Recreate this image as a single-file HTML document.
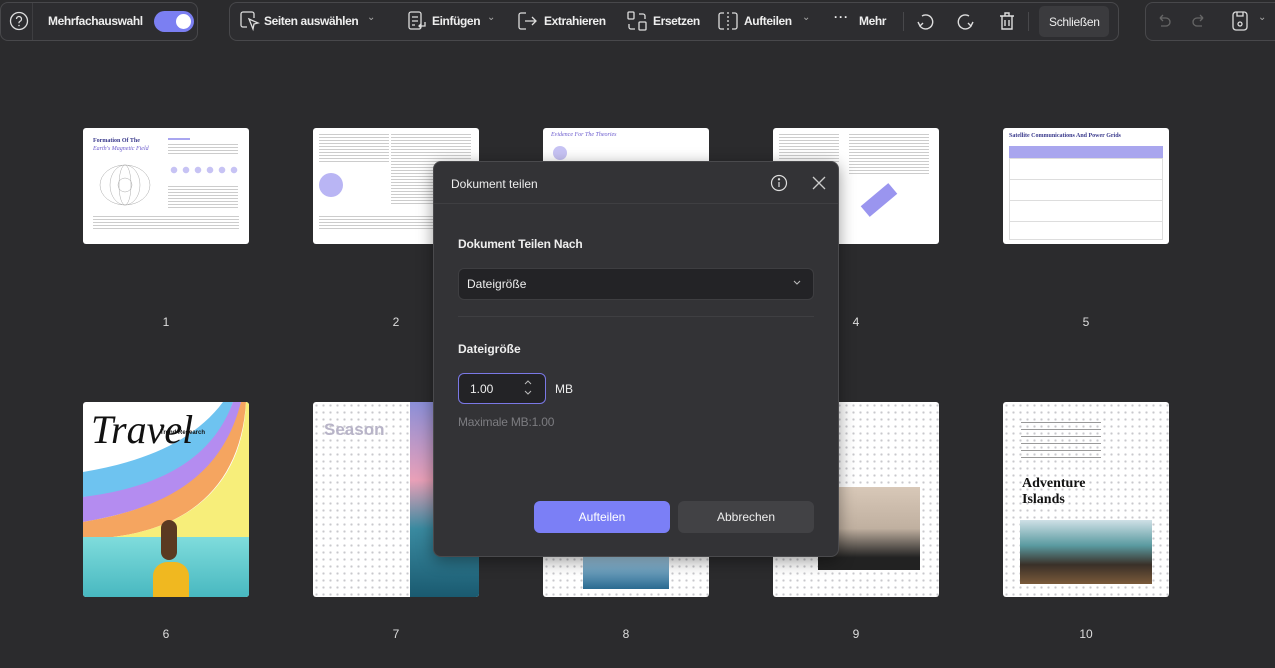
<!DOCTYPE html>
<html><head><meta charset="utf-8"><style>
*{box-sizing:border-box;margin:0;padding:0}
body{width:1275px;height:668px;background:#2b2b2d;font-family:"Liberation Sans",sans-serif;color:#e8e8e8;position:relative;overflow:hidden}
.panel{position:absolute;top:2px;height:39px;border:1px solid #48484b;border-radius:8px;background:#2d2d30}
.ti{position:absolute;top:14px;font-size:12px;font-weight:bold;color:#eee;white-space:nowrap;letter-spacing:-0.2px}
.ch{position:absolute;top:12px;font-size:10px;color:#aaa}
.ic{position:absolute;top:10px}
.th{position:absolute;background:#fff;border-radius:3px;overflow:hidden}
.num{position:absolute;font-size:12px;color:#ddd;width:20px;text-align:center}
.dots{background-color:#fff;background-image:radial-gradient(#c8c8cc 1px,transparent 1.3px);background-size:7px 7px}
.ln{position:absolute;height:2px;background:#bbb}
</style></head><body>

<div class="panel" style="left:0;width:198px"></div>
<svg class="ic" style="left:9px;top:11px" width="20" height="20" viewBox="0 0 20 20"><circle cx="10" cy="10" r="8.5" fill="none" stroke="#ddd" stroke-width="1.3"/><path d="M7.5 8a2.5 2.5 0 1 1 3.5 2.3c-.7.3-1 .8-1 1.5v.5" fill="none" stroke="#ddd" stroke-width="1.3"/><circle cx="10" cy="14.5" r=".8" fill="#ddd"/></svg>
<div style="position:absolute;left:32px;top:3px;width:1px;height:37px;background:#3e3e41"></div>
<div class="ti" style="left:48px;letter-spacing:-0.4px">Mehrfachauswahl</div>
<div style="position:absolute;left:154px;top:11px;width:40px;height:21px;border-radius:11px;background:#7b7ff2"></div>
<div style="position:absolute;left:176px;top:14px;width:15px;height:15px;border-radius:50%;background:#fff"></div>

<div class="panel" style="left:229px;width:890px"></div>
<svg class="ic" style="left:239px" width="22" height="22" viewBox="0 0 22 22" fill="none" stroke="#ddd" stroke-width="1.3"><path d="M8 17H4a2 2 0 0 1-2-2V4a2 2 0 0 1 2-2h9a2 2 0 0 1 2 2v4"/><path d="M10 9l9 4-4 1-1 5z"/></svg>
<div class="ti" style="left:264px;letter-spacing:-0.4px">Seiten auswählen</div><div class="ch" style="left:367px">⌄</div>
<svg class="ic" style="left:406px" width="22" height="22" viewBox="0 0 22 22" fill="none" stroke="#ddd" stroke-width="1.3"><rect x="3" y="2" width="12" height="17" rx="2"/><path d="M6 7h6M6 11h6M6 15h3M19 12v4h-6M15 14l-2 2 2 2"/></svg>
<div class="ti" style="left:432px;letter-spacing:-0.4px">Einfügen</div><div class="ch" style="left:487px">⌄</div>
<svg class="ic" style="left:516px" width="22" height="22" viewBox="0 0 22 22" fill="none" stroke="#ddd" stroke-width="1.3"><path d="M10 3H5a2 2 0 0 0-2 2v12a2 2 0 0 0 2 2h5M9 11h11M16 7l4 4-4 4"/></svg>
<div class="ti" style="left:544px;letter-spacing:-0.4px">Extrahieren</div>
<svg class="ic" style="left:626px" width="22" height="22" viewBox="0 0 22 22" fill="none" stroke="#ddd" stroke-width="1.3"><rect x="2" y="2" width="6" height="7" rx="1"/><rect x="13" y="12" width="7" height="8" rx="1"/><path d="M13 4h4a2 2 0 0 1 2 2v3M9 19H5a2 2 0 0 1-2-2v-3"/></svg>
<div class="ti" style="left:653px;letter-spacing:-0.4px">Ersetzen</div>
<svg class="ic" style="left:717px" width="22" height="22" viewBox="0 0 22 22" fill="none" stroke="#ddd" stroke-width="1.3"><path d="M7 3H4a2 2 0 0 0-2 2v12a2 2 0 0 0 2 2h3M15 3h3a2 2 0 0 1 2 2v12a2 2 0 0 1-2 2h-3"/><path d="M11 2v18" stroke-dasharray="2 2"/></svg>
<div class="ti" style="left:744px;letter-spacing:-0.4px">Aufteilen</div><div class="ch" style="left:802px">⌄</div>
<div class="ti" style="left:834px;top:10px;letter-spacing:1px">···</div>
<div class="ti" style="left:859px;letter-spacing:-0.4px">Mehr</div>
<div style="position:absolute;left:903px;top:12px;width:1px;height:19px;background:#48484b"></div>
<svg class="ic" style="left:914px" width="22" height="22" viewBox="0 0 22 22" fill="none" stroke="#ddd" stroke-width="1.4"><path d="M8 6a7 7 0 1 1-2 10"/><path d="M4 12l2 4 3-3"/></svg>
<svg class="ic" style="left:955px" width="22" height="22" viewBox="0 0 22 22" fill="none" stroke="#ddd" stroke-width="1.4"><path d="M14 6a7 7 0 1 0 2 10"/><path d="M18 12l-2 4-3-3"/></svg>
<svg class="ic" style="left:996px" width="22" height="22" viewBox="0 0 22 22" fill="none" stroke="#ddd" stroke-width="1.4"><path d="M4 6h14M9 6V3h4v3M6 6v13h10V6M9 10v6M13 10v6"/></svg>
<div style="position:absolute;left:1028px;top:12px;width:1px;height:19px;background:#48484b"></div>
<div style="position:absolute;left:1039px;top:6px;width:70px;height:31px;border-radius:5px;background:#3b3b3e"></div>
<div class="ti" style="left:1049px;font-weight:normal;font-size:12px;top:15px;letter-spacing:-0.3px">Schließen</div>

<div class="panel" style="left:1145px;width:130px;border-right:none;border-radius:8px 0 0 8px"></div>
<svg class="ic" style="left:1155px" width="18" height="22" viewBox="0 0 18 22" fill="none" stroke="#666" stroke-width="1.3"><path d="M5 8h6a4 4 0 0 1 0 8H6M5 8l3-3M5 8l3 3"/></svg>
<svg class="ic" style="left:1190px" width="18" height="22" viewBox="0 0 18 22" fill="none" stroke="#666" stroke-width="1.3"><path d="M13 8H7a4 4 0 0 0 0 8h5M13 8l-3-3M13 8l-3 3"/></svg>
<svg class="ic" style="left:1230px" width="20" height="22" viewBox="0 0 20 22" fill="none" stroke="#ddd" stroke-width="1.3"><rect x="3" y="2" width="14" height="18" rx="3"/><path d="M7 2v4h6V2"/><circle cx="10" cy="14" r="2"/></svg>
<div class="ch" style="left:1258px">⌄</div>

<div class="th" style="left:83px;top:128px;width:166px;height:116px">
 <div style="position:absolute;left:10px;top:10px;font:bold 6px 'Liberation Serif',serif;color:#3a3a8c">Formation Of The</div>
 <div style="position:absolute;left:10px;top:18px;font:italic 6px 'Liberation Serif',serif;color:#6a5acd">Earth's Magnetic Field</div>
 <svg style="position:absolute;left:12px;top:32px" width="60" height="50"><g fill="none" stroke="#aaa" stroke-width=".5"><ellipse cx="30" cy="25" rx="25" ry="20"/><ellipse cx="30" cy="25" rx="15" ry="20"/><ellipse cx="30" cy="25" rx="6" ry="20"/><circle cx="30" cy="25" r="7"/></g></svg>
 <div class="ln" style="left:85px;top:10px;width:22px;background:#a9a6f0"></div>
 <div class="ln" style="left:85px;top:16px;width:70px;height:10px;background:repeating-linear-gradient(#ccc 0 1px,transparent 1px 3px)"></div>
 <div style="position:absolute;left:85px;top:38px;width:70px;height:8px;background:radial-gradient(circle,#c7c3f4 3px,transparent 3.5px) 0 0/12px 8px"></div>
 <div class="ln" style="left:85px;top:58px;width:70px;height:22px;background:repeating-linear-gradient(#ccc 0 1px,transparent 1px 3px)"></div>
 <div class="ln" style="left:10px;top:88px;width:146px;height:14px;background:repeating-linear-gradient(#ccc 0 1px,transparent 1px 3px)"></div>
</div>
<div class="th" style="left:313px;top:128px;width:166px;height:116px">
 <div class="ln" style="left:6px;top:6px;width:70px;height:30px;background:repeating-linear-gradient(#ccc 0 1px,transparent 1px 3px)"></div>
 <div style="position:absolute;left:6px;top:45px;width:24px;height:24px;border-radius:50%;background:#b9b5f4"></div>
 <div class="ln" style="left:78px;top:6px;width:80px;height:70px;background:repeating-linear-gradient(#ccc 0 1px,transparent 1px 3px)"></div>
 <div class="ln" style="left:6px;top:88px;width:150px;height:14px;background:repeating-linear-gradient(#ccc 0 1px,transparent 1px 3px)"></div>
</div>
<div class="th" style="left:543px;top:128px;width:166px;height:116px">
 <div style="position:absolute;left:8px;top:4px;font:italic 6px 'Liberation Serif',serif;color:#6a5acd">Evidence For The Theories</div>
 <div style="position:absolute;left:10px;top:18px;width:14px;height:14px;border-radius:50%;background:#c7c3f4"></div>
</div>
<div class="th" style="left:773px;top:128px;width:166px;height:116px">
 <div class="ln" style="left:6px;top:6px;width:60px;height:30px;background:repeating-linear-gradient(#ccc 0 1px,transparent 1px 3px)"></div>
 <div class="ln" style="left:76px;top:6px;width:80px;height:40px;background:repeating-linear-gradient(#ccc 0 1px,transparent 1px 3px)"></div>
 <div style="position:absolute;left:88px;top:65px;width:36px;height:14px;background:#9a95ef;transform:rotate(-40deg)"></div>
</div>
<div class="th" style="left:1003px;top:128px;width:166px;height:116px">
 <div style="position:absolute;left:6px;top:5px;font:bold 6px 'Liberation Serif',serif;color:#3a3a8c">Satellite Communications And Power Grids</div>
 <div style="position:absolute;left:6px;top:18px;width:154px;height:12px;background:#a9a6ee"></div>
 <div style="position:absolute;left:6px;top:30px;width:154px;height:82px;border:1px solid #ddd;background:repeating-linear-gradient(#fff 0 20px,#ddd 20px 21px)"></div>
</div>
<div class="num" style="left:156px;top:315px">1</div>
<div class="num" style="left:386px;top:315px">2</div>
<div class="num" style="left:846px;top:315px">4</div>
<div class="num" style="left:1076px;top:315px">5</div>

<div class="th" style="left:83px;top:402px;width:166px;height:195px">
 <svg style="position:absolute;left:0;top:0" width="166" height="135"><path d="M0 70 C60 60 110 40 140 0 L150 0 C130 60 80 90 0 95Z" fill="#6ec3f0"/><path d="M0 95 C80 85 130 55 150 0 L158 0 C145 70 90 105 0 120Z" fill="#b48cf0"/><path d="M0 120 C90 105 140 70 158 0 L163 0 C158 80 110 125 30 135 L0 135Z" fill="#f5a560"/><path d="M30 135 C110 125 160 80 163 0 L166 0 L166 135Z" fill="#f7ee7a"/></svg>
 <div style="position:absolute;left:8px;top:4px;font:italic 40px 'Liberation Serif',serif;color:#111">Travel</div>
 <div style="position:absolute;left:77px;top:28px;font:bold 6px 'Liberation Sans';color:#111">Trend Research</div>
 <div style="position:absolute;left:0;top:135px;width:166px;height:60px;background:linear-gradient(#7fdcdc,#48b8c0)"></div>
 <div style="position:absolute;left:70px;top:160px;width:36px;height:35px;background:#f0b820;border-radius:40% 40% 0 0"></div>
 <div style="position:absolute;left:78px;top:118px;width:16px;height:40px;background:#5a3a22;border-radius:8px"></div>
</div>
<div class="th dots" style="left:313px;top:402px;width:166px;height:195px">
 <div style="position:absolute;left:11px;top:18px;font:bold 17px 'Liberation Sans';color:#b8b4c8">Season</div>
 <div style="position:absolute;left:97px;top:0;width:69px;height:195px;background:linear-gradient(#8b8fd8,#e9a0b8 40%,#3a8aa0 65%,#1a5a70)"></div>
</div>
<div class="th dots" style="left:543px;top:402px;width:166px;height:195px">
 <div style="position:absolute;left:40px;top:155px;width:86px;height:32px;background:linear-gradient(#a0c8e0,#2a6a90)"></div>
</div>
<div class="th dots" style="left:773px;top:402px;width:166px;height:195px">
 <div style="position:absolute;left:45px;top:85px;width:102px;height:83px;background:linear-gradient(#d8c8b8,#c0b0a0 50%,#222 85%)"></div>
</div>
<div class="th dots" style="left:1003px;top:402px;width:166px;height:195px">
 <div class="ln" style="left:18px;top:20px;width:80px;height:40px;background:repeating-linear-gradient(#999 0 1px,transparent 1px 7px)"></div>
 <div style="position:absolute;left:19px;top:74px;font:bold 14px/16px 'Liberation Serif',serif;color:#111">Adventure<br>Islands</div>
 <div style="position:absolute;left:17px;top:118px;width:132px;height:64px;background:linear-gradient(#cfe0e6,#5a9aa0 40%,#3a3028 70%,#7a5a3a)"></div>
</div>
<div class="num" style="left:156px;top:627px">6</div>
<div class="num" style="left:386px;top:627px">7</div>
<div class="num" style="left:616px;top:627px">8</div>
<div class="num" style="left:846px;top:627px">9</div>
<div class="num" style="left:1076px;top:627px">10</div>

<div style="position:absolute;left:433px;top:161px;width:406px;height:396px;background:#333336;border:1px solid #4a4a4d;border-radius:8px;box-shadow:0 4px 16px rgba(0,0,0,.4)">
 <div style="position:absolute;left:17px;top:15px;font-size:12px;color:#eee">Dokument teilen</div>
 <svg style="position:absolute;left:336px;top:12px" width="18" height="18" viewBox="0 0 18 18" fill="none" stroke="#ddd" stroke-width="1.2"><circle cx="9" cy="9" r="7.5"/><path d="M9 8v5"/><circle cx="9" cy="5.3" r=".6" fill="#ddd"/></svg>
 <svg style="position:absolute;left:377px;top:13px" width="16" height="16" viewBox="0 0 16 16" stroke="#ccc" stroke-width="1.3"><path d="M2 2l12 12M14 2L2 14"/></svg>
 <div style="position:absolute;left:0;top:41px;width:404px;height:1px;background:#3f3f42"></div>
 <div style="position:absolute;left:24px;top:75px;font-size:12px;font-weight:bold;color:#eee;letter-spacing:-0.2px">Dokument Teilen Nach</div>
 <div style="position:absolute;left:24px;top:106px;width:356px;height:32px;background:#232326;border:1px solid #3e3e41;border-radius:6px"></div>
 <div style="position:absolute;left:33px;top:115px;font-size:12px;color:#eee">Dateigröße</div>
 <svg style="position:absolute;left:359px;top:118px" width="8" height="6" viewBox="0 0 8 6" fill="none" stroke="#bbb" stroke-width="1.1"><path d="M1 1l3 3 3-3"/></svg>
 <div style="position:absolute;left:24px;top:154px;width:356px;height:1px;background:#3f3f42"></div>
 <div style="position:absolute;left:24px;top:180px;font-size:12px;font-weight:bold;color:#eee">Dateigröße</div>
 <div style="position:absolute;left:24px;top:211px;width:88px;height:31px;background:#232326;border:1px solid #7a78e6;border-radius:6px"></div>
 <div style="position:absolute;left:36px;top:220px;font-size:12px;color:#eee">1.00</div>
 <svg style="position:absolute;left:90px;top:217px" width="8" height="18" viewBox="0 0 8 18" fill="none" stroke="#bbb" stroke-width="1"><path d="M1 5l3-3 3 3M1 12l3 3 3-3"/></svg>
 <div style="position:absolute;left:121px;top:220px;font-size:12px;color:#eee">MB</div>
 <div style="position:absolute;left:24px;top:253px;font-size:12px;color:#7c7c80;letter-spacing:-0.2px">Maximale MB:1.00</div>
 <div style="position:absolute;left:100px;top:339px;width:136px;height:32px;background:#7b7ff6;border-radius:6px;color:#fff;font-size:12px;text-align:center;line-height:32px">Aufteilen</div>
 <div style="position:absolute;left:244px;top:339px;width:136px;height:32px;background:#424245;border-radius:6px;color:#eee;font-size:12px;text-align:center;line-height:32px">Abbrechen</div>
</div>
</body></html>
